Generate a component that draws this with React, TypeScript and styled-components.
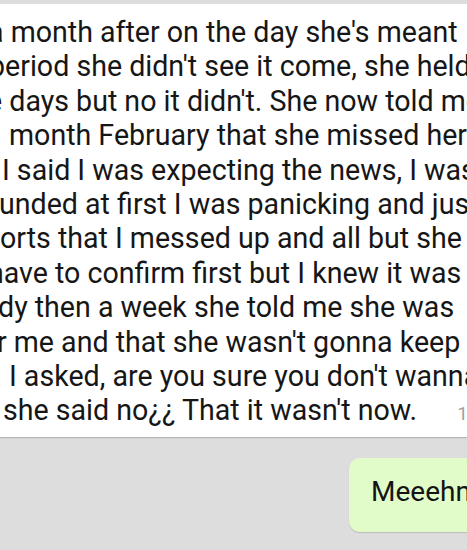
import React from "react";
import styled, { createGlobalStyle } from "styled-components";

const GlobalStyle = createGlobalStyle`
  html, body {
    margin: 0;
    padding: 0;
    background: #dddddd;
    overflow: hidden;
  }
`;

// each visible line, with how far its first glyph sits left of the screen edge
const lines = [
  { text: "a month after on the day she's meant", shift: -12 },
  { text: "period she didn't see it come, she held on for", shift: -11 },
  { text: "e days but no it didn't. She now told me", shift: -13 },
  { text: "month February that she missed her", shift: 9 },
  { text: "I said I was expecting the news, I was", shift: 2 },
  { text: "unded at first I was panicking and just", shift: -1 },
  { text: "orts that I messed up and all but she", shift: 0 },
  { text: "have to confirm first but I knew it was", shift: -12 },
  { text: "dy then a week she told me she was", shift: -2 },
  { text: "r me and that she wasn't gonna keep it", shift: -3 },
  { text: "I asked, are you sure you don't wanna", shift: 9 },
];

const App = () => {
  return (
    <>
      <GlobalStyle />
      <ChatArea>
        <IncomingBubble>
          {lines.map(({ text, shift }, i) => (
            <Line key={i} $shift={shift}>
              {text}
            </Line>
          ))}
          <LastRow>
            <Line $shift={3}>she said no¿¿ That it wasn't now.</Line>
            <Time>11:24 PM</Time>
          </LastRow>
        </IncomingBubble>
        <OutgoingRow>
          <OutgoingBubble>Meeehn</OutgoingBubble>
        </OutgoingRow>
      </ChatArea>
    </>
  );
};

const ChatArea = styled.div`
  width: 467px;
  height: 550px;
  padding-top: 4px;
  box-sizing: border-box;
  background: #dddddd;
  font-family: Roboto, "Noto Sans", sans-serif;
  display: flex;
  flex-direction: column;
  overflow: hidden;
`;

const IncomingBubble = styled.div`
  width: 467px;
  height: 433px;
  box-sizing: border-box;
  padding-top: 11px;
  background: #ffffff;
  box-shadow: 0 1px 1px rgba(0, 0, 0, 0.18);
  display: flex;
  flex-direction: column;
`;

const Line = styled.div<{ $shift: number }>`
  margin-left: ${(p) => p.$shift}px;
  white-space: nowrap;
  font-size: 28.6px;
  line-height: 34.4px;
  color: #161616;
`;

const LastRow = styled.div`
  display: flex;
  align-items: baseline;
  white-space: nowrap;
`;

const Time = styled.span`
  margin-left: 40px;
  font-size: 19px;
  color: #a0a0a0;
`;

const OutgoingRow = styled.div`
  display: flex;
  justify-content: flex-start;
  padding: 21px 0 0 349px;
`;

const OutgoingBubble = styled.div`
  width: 160px;
  height: 74px;
  flex-shrink: 0;
  box-sizing: border-box;
  padding: 16px 0 0 22px;
  border-radius: 11px;
  background: #e1fcc9;
  box-shadow: 0 1px 1px rgba(0, 0, 0, 0.15);
  font-size: 28px;
  line-height: 36px;
  color: #141414;
  white-space: nowrap;
`;

export default App;
